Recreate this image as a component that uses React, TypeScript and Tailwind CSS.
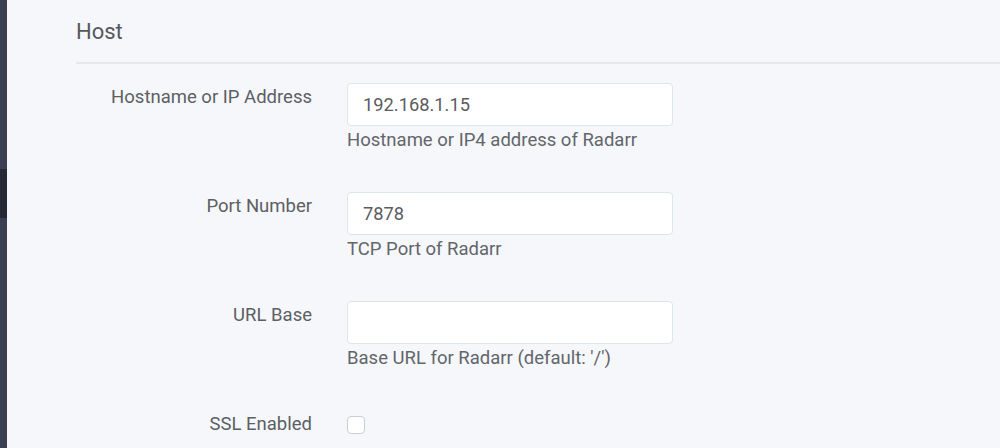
import { useState } from 'react';

interface FieldProps {
    label: string;
    value: string;
    help: string;
}

function TextField({ label, value, help }: FieldProps) {
    const [text, setText] = useState(value);
    return (
        <div className="flex mb-[40px]">
            <label className="w-[236px] shrink-0 text-right pt-[2px] leading-[24px] text-[18.5px] text-[#5c5f64]">
                {label}
            </label>
            <div className="ml-[35px] w-[326px]">
                <input
                    value={text}
                    onChange={e => setText(e.target.value)}
                    className="block w-full h-[43px] px-[15px] bg-white border border-[#dde6e9] rounded-[4px] text-[18.3px] text-[#5a5c60] outline-none"
                />
                <div className="mt-[2px] leading-[24px] text-[18.5px] text-[#62666b]">{help}</div>
            </div>
        </div>
    );
}

export default function App() {
    const [ssl, setSsl] = useState(false);

    return (
        <div className="flex w-[1000px] h-[448px] overflow-hidden bg-[#f5f7fa]" style={{ fontFamily: 'Roboto, "Open Sans", sans-serif' }}>
            <div className="w-[7px] shrink-0 bg-[#3a3f51] flex flex-col">
                <div className="h-[169px]" />
                <div className="h-[49px] bg-[#262935]" />
            </div>

            <div className="flex-1 pl-[69px]">
                <div className="pt-[16px] pb-[15px] border-b-2 border-[#e6e7eb] text-[22px] leading-[31px] text-[#55585d]">
                    Host
                </div>

                <div className="mt-[19px]">
                    <TextField label="Hostname or IP Address" value="192.168.1.15" help="Hostname or IP4 address of Radarr" />
                    <TextField label="Port Number" value="7878" help="TCP Port of Radarr" />
                    <TextField label="URL Base" value="" help="Base URL for Radarr (default: '/')" />

                    <div className="flex">
                        <label className="w-[236px] shrink-0 text-right pt-[2px] leading-[24px] text-[18.5px] text-[#5c5f64]">
                            SSL Enabled
                        </label>
                        <div className="ml-[35px] pt-[6px]">
                            <button
                                onClick={() => setSsl(!ssl)}
                                className="block w-[18px] h-[18px] rounded-[4px] border border-[#c9ced4] bg-white"
                            >
                                {ssl && (
                                    <svg viewBox="0 0 16 16" className="w-full h-full">
                                        <path d="M3.5 8.5l3 3 6-7" fill="none" stroke="#5d9cec" strokeWidth="2" />
                                    </svg>
                                )}
                            </button>
                        </div>
                    </div>
                </div>
            </div>
        </div>
    );
}
